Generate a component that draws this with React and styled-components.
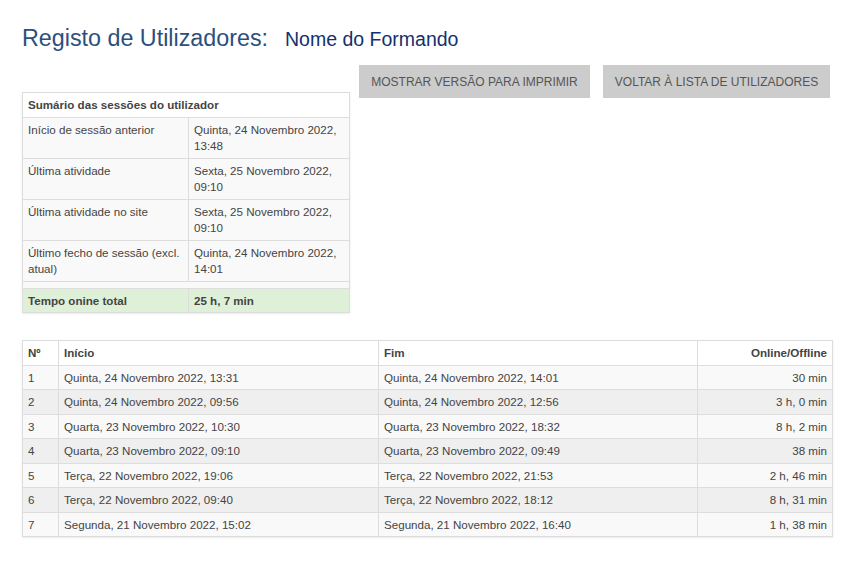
import React from "react"
import styled, { createGlobalStyle } from "styled-components"

const Global = createGlobalStyle`
  body { margin: 0; font-family: "Liberation Sans", Arial, sans-serif; font-size: 11.6px; color: #444; background: #fff; }
`

const Page = styled.div`
  padding: 25px 34px 20px 22px;
`

const TitleRow = styled.div`
  display: flex;
  align-items: baseline;
  gap: 17px;
  margin: 0 0 14px;
`

const Title = styled.h1`
  margin: 0;
  font-weight: normal;
  font-size: 23.3px;
  color: #2c4f7c;
`

const Name = styled.span`
  font-size: 19.5px;
  color: #12316e;
`

const Top = styled.div`
  display: flex;
  align-items: flex-start;
  gap: 9px;
`

const Buttons = styled.div`
  display: flex;
  gap: 13px;
  margin-top: -1px;
`

const Button = styled.button`
  background: #cccccc;
  border: none;
  color: #555;
  font-family: inherit;
  font-size: 12px;
  height: 33px;
  width: ${(p) => p.$w}px;
  white-space: nowrap;
  text-transform: uppercase;
`

const Table = styled.table`
  border-collapse: collapse;
  table-layout: fixed;
  border: 1px solid #ddd;
  box-shadow: 0 1px 2px rgba(0,0,0,0.08);
  width: ${(p) => p.$w}px;
  flex: none;
  margin-top: ${(p) => p.$mt || 0}px;
  td, th {
    border: 1px solid #ddd;
    padding: 4px 5px 3px;
    text-align: left;
    vertical-align: top;
    line-height: 16.5px;
  }
  th { font-weight: bold; color: #444; }
`

const Row = styled.tr`
  background: ${(p) => p.$bg || "#f9f9f9"};
  td { font-weight: ${(p) => (p.$bold ? "bold" : "normal")}; }
`

const Cell = styled.td`
  text-align: ${(p) => p.$right ? "right" : "left"} !important;
`

const Head = styled.th`
  text-align: ${(p) => p.$right ? "right" : "left"} !important;
  width: ${(p) => p.$w || "auto"};
`

const Spacer = styled.td`
  padding: 3px !important;
`

const summary = [
  ["Início de sessão anterior", "Quinta, 24 Novembro 2022, 13:48"],
  ["Última atividade", "Sexta, 25 Novembro 2022, 09:10"],
  ["Última atividade no site", "Sexta, 25 Novembro 2022, 09:10"],
  ["Último fecho de sessão (excl. atual)", "Quinta, 24 Novembro 2022, 14:01"],
]

const sessions = [
  ["Quinta, 24 Novembro 2022, 13:31", "Quinta, 24 Novembro 2022, 14:01", "30 min"],
  ["Quinta, 24 Novembro 2022, 09:56", "Quinta, 24 Novembro 2022, 12:56", "3 h, 0 min"],
  ["Quarta, 23 Novembro 2022, 10:30", "Quarta, 23 Novembro 2022, 18:32", "8 h, 2 min"],
  ["Quarta, 23 Novembro 2022, 09:10", "Quarta, 23 Novembro 2022, 09:49", "38 min"],
  ["Terça, 22 Novembro 2022, 19:06", "Terça, 22 Novembro 2022, 21:53", "2 h, 46 min"],
  ["Terça, 22 Novembro 2022, 09:40", "Terça, 22 Novembro 2022, 18:12", "8 h, 31 min"],
  ["Segunda, 21 Novembro 2022, 15:02", "Segunda, 21 Novembro 2022, 16:40", "1 h, 38 min"],
]

export default function App() {
  return (
    <Page>
      <Global />
      <TitleRow>
        <Title>Registo de Utilizadores:</Title>
        <Name>Nome do Formando</Name>
      </TitleRow>
      <Top>
        <Table $w={328} $mt={26}>
          <colgroup>
            <col style={{ width: 166 }} />
            <col />
          </colgroup>
          <tbody>
            <Row $bg="#fff"><Head colSpan={2}>Sumário das sessões do utilizador</Head></Row>
            {summary.map(([k, v]) => (
              <Row key={k}>
                <Cell>{k}</Cell>
                <Cell>{v}</Cell>
              </Row>
            ))}
            <Row><Spacer colSpan={2} /></Row>
            <Row $bg="#dff0d8" $bold>
              <Cell>Tempo onine total</Cell>
              <Cell>25 h, 7 min</Cell>
            </Row>
          </tbody>
        </Table>
        <Buttons>
          <Button $w={231}>Mostrar versão para imprimir</Button>
          <Button $w={227}>Voltar à lista de utilizadores</Button>
        </Buttons>
      </Top>
      <Table $w={811} $mt={27}>
        <tbody>
          <Row $bg="#fff">
            <Head $w="25px">Nº</Head>
            <Head $w="309px">Início</Head>
            <Head $w="308px">Fim</Head>
            <Head $right>Online/Offline</Head>
          </Row>
          {sessions.map((s, i) => (
            <Row key={i} $bg={i % 2 ? "#efefef" : "#f9f9f9"}>
              <Cell>{i + 1}</Cell>
              <Cell>{s[0]}</Cell>
              <Cell>{s[1]}</Cell>
              <Cell $right>{s[2]}</Cell>
            </Row>
          ))}
        </tbody>
      </Table>
    </Page>
  )
}
